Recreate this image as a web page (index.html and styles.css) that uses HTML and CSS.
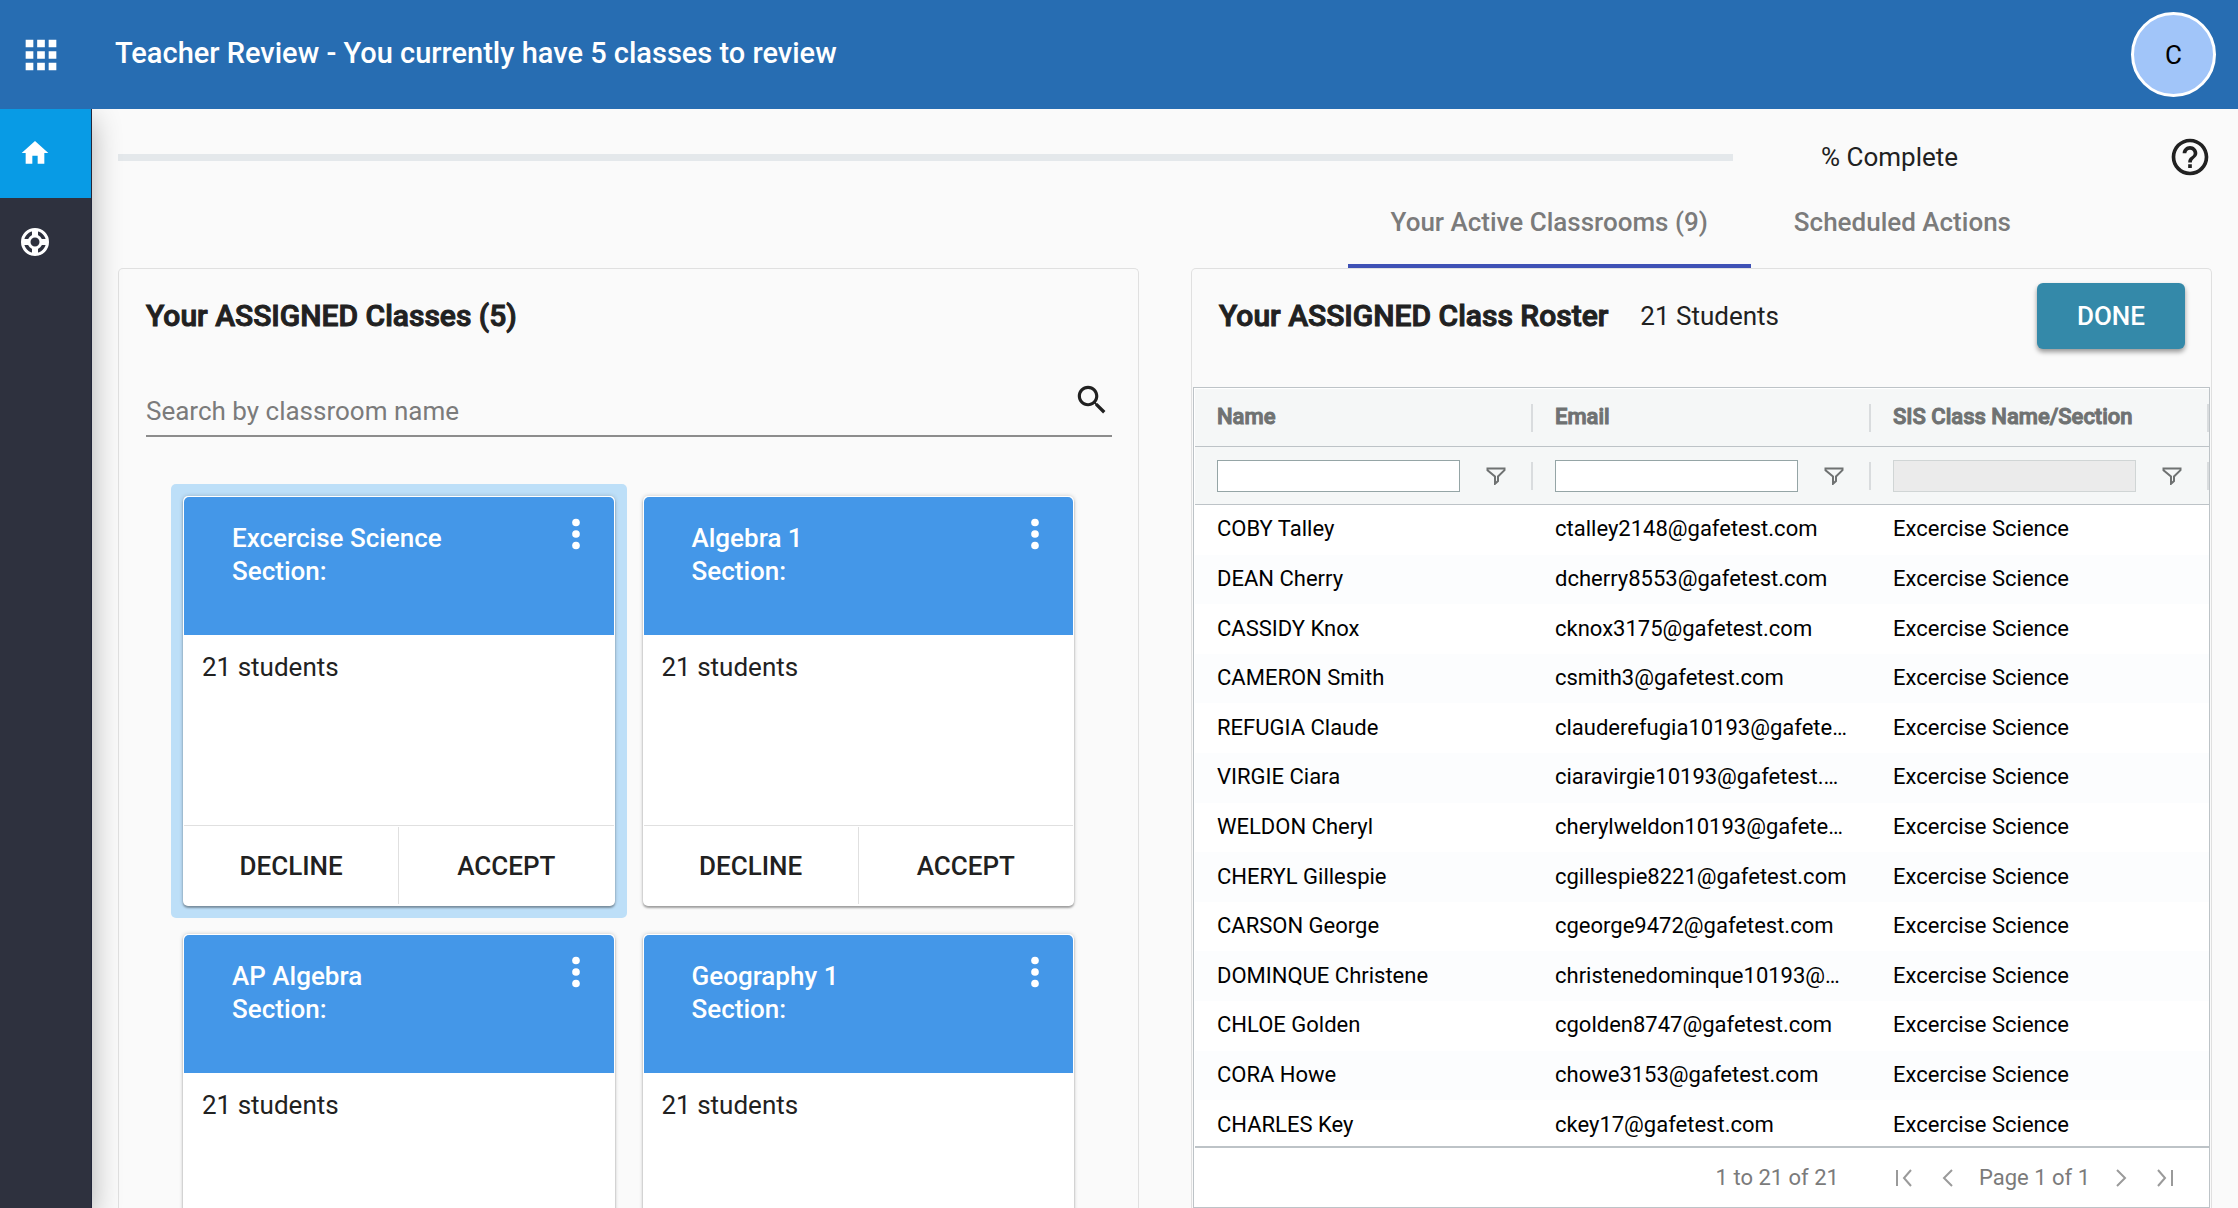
FILE: index.html
```html
<!DOCTYPE html>
<html lang="en">
<head>
    <meta charset="UTF-8">
    <meta name="viewport" content="width=device-width, initial-scale=1.0">
    <title>Teacher Review</title>
    <link rel="stylesheet" href="styles.css">
</head>
<body>
    <!-- Shared icons -->
    <svg class="icon-defs" aria-hidden="true">
        <symbol id="icon-more" viewBox="0 0 24 24">
            <circle cx="12" cy="6" r="2"/>
            <circle cx="12" cy="12" r="2"/>
            <circle cx="12" cy="18" r="2"/>
        </symbol>
        <symbol id="icon-filter" viewBox="0 0 20 18">
            <path d="M1.5 1.5h17v1.700l-6.500 6.300v4.500l-3 2.800v-7.300l-7.500-6.300z" fill="none" stroke="currentColor" stroke-width="2"/>
        </symbol>
    </svg>

    <!-- Header -->
    <header class="header">
        <button class="apps-button" type="button" aria-label="Apps">
            <svg viewBox="0 0 24 24"><path d="M4 8h4V4H4v4zm6 12h4v-4h-4v4zm-6 0h4v-4H4v4zm0-6h4v-4H4v4zm6 0h4v-4h-4v4zm6-10v4h4V4h-4zm-6 4h4V4h-4v4zm6 6h4v-4h-4v4zm0 6h4v-4h-4v4z"/></svg>
        </button>
        <h1>Teacher Review - You currently have 5 classes to review</h1>
        <button class="avatar" type="button">C</button>
    </header>

    <div class="layout">
        <!-- Sidebar -->
        <nav class="sidebar">
            <a class="active" href="#" aria-label="Home">
                <svg viewBox="0 0 24 24"><path d="M10 20v-6h4v6h5v-8h3L12 3 2 12h3v8z"/></svg>
            </a>
            <a href="#" aria-label="Support">
                <svg viewBox="0 0 28 28">
                    <circle cx="14" cy="14" r="12.5" fill="none" stroke="currentColor" stroke-width="3"/>
                    <circle cx="14" cy="14" r="6" fill="none" stroke="currentColor" stroke-width="3"/>
                    <path d="M14 2v6M14 20v6M2 14h6M20 14h6" stroke="currentColor" stroke-width="6"/>
                </svg>
            </a>
        </nav>

        <main class="content">
            <div class="progress-row">
                <div class="progress" role="progressbar" aria-label="Review progress"></div>
                <span class="progress-text">% Complete</span>
                <button class="help-button" type="button" aria-label="Help">
                    <svg viewBox="0 0 24 24"><path d="M11 18h2v-2h-2v2zm1-16C6.480 2 2 6.480 2 12s4.480 10 10 10 10-4.480 10-10S17.520 2 12 2zm0 18c-4.410 0-8-3.590-8-8s3.590-8 8-8 8 3.590 8 8-3.590 8-8 8zm0-14c-2.210 0-4 1.790-4 4h2c0-1.100.9-2 2-2s2 .9 2 2c0 2-3 1.750-3 5h2c0-2.250 3-2.500 3-5 0-2.210-1.790-4-4-4z"/></svg>
                </button>
            </div>

            <div class="tabs">
                <button class="tab selected" type="button">Your Active Classrooms (9)</button>
                <button class="tab" type="button">Scheduled Actions</button>
            </div>

            <div class="panels">
                <!-- Assigned classes -->
                <section class="panel classes">
                    <h2>Your ASSIGNED Classes (5)</h2>
                    <div class="search">
                        <input type="text" placeholder="Search by classroom name" aria-label="Search by classroom name">
                        <svg viewBox="0 0 24 24"><path d="M15.500 14h-.79l-.28-.27C15.410 12.590 16 11.110 16 9.500 16 5.910 13.090 3 9.500 3S3 5.910 3 9.500 5.910 16 9.500 16c1.610 0 3.090-.59 4.230-1.570l.27.28v.79l5 4.990L20.490 19l-4.990-5zm-6 0C7.010 14 5 11.990 5 9.500S7.010 5 9.500 5 14 7.010 14 9.500 11.990 14 9.500 14z"/></svg>
                    </div>

                    <div class="class-grid">
                        <div class="class-cell selected">
                            <article class="card">
                                <div class="card-header">
                                    <h3>Excercise Science<br>Section:</h3>
                                    <button type="button" aria-label="More"><svg><use href="#icon-more"/></svg></button>
                                </div>
                                <p>21 students</p>
                                <div class="card-actions">
                                    <button type="button">DECLINE</button>
                                    <button type="button">ACCEPT</button>
                                </div>
                            </article>
                        </div>
                        <div class="class-cell">
                            <article class="card">
                                <div class="card-header">
                                    <h3>Algebra 1<br>Section:</h3>
                                    <button type="button" aria-label="More"><svg><use href="#icon-more"/></svg></button>
                                </div>
                                <p>21 students</p>
                                <div class="card-actions">
                                    <button type="button">DECLINE</button>
                                    <button type="button">ACCEPT</button>
                                </div>
                            </article>
                        </div>
                        <div class="class-cell">
                            <article class="card">
                                <div class="card-header">
                                    <h3>AP Algebra<br>Section:</h3>
                                    <button type="button" aria-label="More"><svg><use href="#icon-more"/></svg></button>
                                </div>
                                <p>21 students</p>
                            </article>
                        </div>
                        <div class="class-cell">
                            <article class="card">
                                <div class="card-header">
                                    <h3>Geography 1<br>Section:</h3>
                                    <button type="button" aria-label="More"><svg><use href="#icon-more"/></svg></button>
                                </div>
                                <p>21 students</p>
                            </article>
                        </div>
                    </div>
                </section>

                <!-- Class roster -->
                <section class="panel roster">
                    <div class="roster-header">
                        <h2>Your ASSIGNED Class Roster</h2>
                        <span>21 Students</span>
                        <button class="done-button" type="button">DONE</button>
                    </div>

                    <div class="roster-grid">
                        <div class="roster-scroll">
                            <table>
                                <thead>
                                    <tr>
                                        <th><div class="head-cell">Name</div></th>
                                        <th><div class="head-cell">Email</div></th>
                                        <th><div class="head-cell">SIS Class Name/Section</div></th>
                                    </tr>
                                    <tr>
                                        <td><div class="head-cell"><input type="text" aria-label="Filter name"><svg><use href="#icon-filter"/></svg></div></td>
                                        <td><div class="head-cell"><input type="text" aria-label="Filter email"><svg><use href="#icon-filter"/></svg></div></td>
                                        <td><div class="head-cell"><input type="text" aria-label="Filter class" disabled><svg><use href="#icon-filter"/></svg></div></td>
                                    </tr>
                                </thead>
                                <tbody>
                                    <tr><td>COBY Talley</td><td>ctalley2148@gafetest.com</td><td>Excercise Science</td></tr>
                                    <tr><td>DEAN Cherry</td><td>dcherry8553@gafetest.com</td><td>Excercise Science</td></tr>
                                    <tr><td>CASSIDY Knox</td><td>cknox3175@gafetest.com</td><td>Excercise Science</td></tr>
                                    <tr><td>CAMERON Smith</td><td>csmith3@gafetest.com</td><td>Excercise Science</td></tr>
                                    <tr><td>REFUGIA Claude</td><td>clauderefugia10193@gafetest.com</td><td>Excercise Science</td></tr>
                                    <tr><td>VIRGIE Ciara</td><td>ciaravirgie10193@gafetest.com</td><td>Excercise Science</td></tr>
                                    <tr><td>WELDON Cheryl</td><td>cherylweldon10193@gafetest.com</td><td>Excercise Science</td></tr>
                                    <tr><td>CHERYL Gillespie</td><td>cgillespie8221@gafetest.com</td><td>Excercise Science</td></tr>
                                    <tr><td>CARSON George</td><td>cgeorge9472@gafetest.com</td><td>Excercise Science</td></tr>
                                    <tr><td>DOMINQUE Christene</td><td>christenedominque10193@gafetest.com</td><td>Excercise Science</td></tr>
                                    <tr><td>CHLOE Golden</td><td>cgolden8747@gafetest.com</td><td>Excercise Science</td></tr>
                                    <tr><td>CORA Howe</td><td>chowe3153@gafetest.com</td><td>Excercise Science</td></tr>
                                    <tr><td>CHARLES Key</td><td>ckey17@gafetest.com</td><td>Excercise Science</td></tr>
                                </tbody>
                            </table>
                        </div>
                        <div class="paging">
                            <span class="paging-rows">1 to 21 of 21</span>
                            <button type="button" aria-label="First page"><svg viewBox="0 0 18 18"><path d="M2 1v16M16 1L9 9l7 8"/></svg></button>
                            <button type="button" aria-label="Previous page"><svg viewBox="0 0 18 18"><path d="M13 1L5 9l8 8"/></svg></button>
                            <span>Page 1 of 1</span>
                            <button type="button" aria-label="Next page"><svg viewBox="0 0 18 18"><path d="M5 1l8 8-8 8"/></svg></button>
                            <button type="button" aria-label="Last page"><svg viewBox="0 0 18 18"><path d="M16 1v16M2 1l7 8-7 8"/></svg></button>
                        </div>
                    </div>
                </section>
            </div>
        </main>
    </div>
</body>
</html>
```

FILE: styles.css
```css
* {
    box-sizing: border-box;
}

body {
    font-family: Roboto, Arial, sans-serif;
    font-size: 26px;
    color: #212121;
    background-color: #fafafa;
    margin: 0;
    height: 100vh;
    display: flex;
    flex-direction: column;
    overflow: hidden;
}

h1, h2, h3, p {
    margin: 0;
}

button {
    font-family: inherit;
    font-size: 26px;
    color: inherit;
    background: none;
    border: none;
    padding: 0;
    cursor: pointer;
}

svg {
    display: block;
    fill: currentColor;
}

.icon-defs {
    display: none;
}

/* Header */
.header {
    display: flex;
    align-items: center;
    height: 109px;
    flex-shrink: 0;
    padding: 0 22px 0 18px;
    background-color: #276db2;
    color: white;
}

.apps-button svg {
    width: 46px;
    height: 46px;
}

.header h1 {
    flex: 1;
    margin-left: 51px;
    padding-bottom: 3px;
    font-size: 29px;
    font-weight: 500;
}

.avatar {
    width: 85px;
    height: 85px;
    border: 3px solid white;
    border-radius: 50%;
    background-color: #a1c5f9;
    color: black;
}

.layout {
    display: flex;
    flex: 1;
    min-height: 0;
}

/* Sidebar */
.sidebar {
    width: 92px;
    flex-shrink: 0;
    background-color: #2e313e;
    border-right: 1px solid #23263a;
    box-shadow: 0 10px 30px rgba(0, 0, 0, 0.3);
    clip-path: inset(0 -50px 0 0);
}

.sidebar a {
    display: flex;
    align-items: center;
    height: 89px;
    padding: 0 0 2px 19px;
    color: white;
}

.sidebar a.active {
    background-color: #089be5;
}

.sidebar svg {
    width: 32px;
    height: 28px;
}

.sidebar .active svg {
    height: 32px;
}

.content {
    display: flex;
    flex-direction: column;
    flex: 1;
    min-width: 0;
    padding: 0 26px;
}

/* Progress bar and help */
.progress-row {
    display: flex;
    align-items: center;
    height: 95px;
    flex-shrink: 0;
}

.progress {
    flex: 1;
    height: 7px;
    margin-top: 2px;
    background-color: #e4e8eb;
}

.progress-text {
    width: 435px;
    padding-left: 88px;
}

.help-button svg {
    width: 44px;
    height: 44px;
}

/* Tabs */
.tabs {
    display: flex;
    justify-content: flex-end;
    height: 64px;
    flex-shrink: 0;
    padding-right: 158px;
}

.tab {
    padding: 0 43px 24px;
    border-bottom: 4px solid transparent;
    color: #7b7b7b;
    font-weight: 500;
}

.tab.selected {
    border-bottom-color: #3f51b5;
}

/* Panels */
.panels {
    display: grid;
    grid-template-columns: 1fr 1fr;
    grid-template-rows: 100%;
    column-gap: 52px;
    flex: 1;
    min-height: 0;
}

.panel {
    min-width: 0;
    border: 1px solid #e0e0e0;
    border-bottom: none;
    border-radius: 5px 5px 0 0;
    overflow: hidden;
}

h2 {
    font-size: 30px;
    font-weight: 500;
    line-height: 94px;
    -webkit-text-stroke: 1px currentColor;
}

.classes h2 {
    padding-left: 27px;
}

.search {
    display: flex;
    align-items: flex-start;
    height: 58px;
    margin: 16px 26px 47px 27px;
    border-bottom: 2px solid #8c8c8c;
}

.search input {
    flex: 1;
    height: 64px;
    padding: 0;
    border: none;
    outline: none;
    background: none;
    font: inherit;
}

.search input::placeholder {
    color: #7b7b7b;
    opacity: 1;
}

.search svg {
    width: 38px;
    height: 38px;
    margin: 2px 1px 0 0;
}

/* Class cards */
.class-grid {
    display: grid;
    grid-template-columns: 1fr 1fr;
    gap: 4px;
    padding: 0 52px;
}

.class-cell {
    padding: 12px;
    border-radius: 5px;
}

.class-cell.selected {
    background-color: #bddff8;
}

.card {
    display: flex;
    flex-direction: column;
    height: 410px;
    padding: 1px;
    border-radius: 5px;
    background-color: white;
    box-shadow: 0 2px 2px rgba(0, 0, 0, 0.3), 0 0 4px rgba(0, 0, 0, 0.2);
}

.card-header {
    display: flex;
    justify-content: space-between;
    align-items: flex-start;
    height: 138px;
    padding: 14px 15px 0 48px;
    border-radius: 5px 5px 0 0;
    background-color: #4497e8;
    color: white;
}

.card h3 {
    padding-top: 11px;
    font-size: 26px;
    font-weight: 500;
    line-height: 33px;
}

.card-header svg {
    width: 46px;
    height: 46px;
}

.card p {
    flex: 1;
    padding: 16px 18px;
    line-height: 32px;
}

.card-actions {
    display: flex;
    height: 80px;
    border-top: 1px solid #e0e0e0;
    padding: 1px 0;
}

.card-actions button {
    flex: 1;
    font-weight: 500;
}

.card-actions button + button {
    border-left: 1px solid #e0e0e0;
}

/* Roster */
.roster {
    display: flex;
    flex-direction: column;
}

.roster-header {
    display: flex;
    align-items: center;
    height: 118px;
    flex-shrink: 0;
    padding: 0 26px 24px 27px;
}

.roster-header span {
    margin-left: 32px;
}

.done-button {
    width: 148px;
    height: 66px;
    margin-left: auto;
    border-radius: 6px;
    background-color: #3489a9;
    color: white;
    font-weight: 500;
    box-shadow: 0 3px 5px rgba(0, 0, 0, 0.4);
}

.roster-grid {
    display: flex;
    flex-direction: column;
    flex: 1;
    min-height: 0;
    margin: 0 1px;
    padding: 1px 0 0 1px;
    border: 1px solid #bdc3c7;
    background-color: white;
    font-size: 22px;
    color: black;
}

.roster-scroll {
    flex: 1;
    min-height: 0;
    overflow: hidden;
}

table {
    width: 100%;
    height: 761px;
    table-layout: fixed;
    border-collapse: separate;
    border-spacing: 0;
}

thead tr {
    height: 58px;
    background-color: #f5f7f7;
    color: #6f7272;
}

tbody tr:nth-child(even) {
    background-color: #fcfdfe;
}

th, td {
    padding: 0 22px 2px;
    overflow: hidden;
    text-overflow: ellipsis;
    white-space: nowrap;
    text-align: left;
}

thead th, thead td {
    height: 58px;
    padding: 0;
    border-bottom: 1px solid #bdc3c7;
}

th {
    font-weight: 500;
    -webkit-text-stroke: 1px currentColor;
}

.head-cell {
    display: flex;
    align-items: center;
    height: 28px;
    padding-left: 22px;
    border-right: 2px solid #d9dcde;
}

th .head-cell {
    padding-bottom: 2px;
}

.head-cell input {
    flex: 1;
    min-width: 0;
    height: 32px;
    border: 1px solid #95a5a6;
    background-color: white;
}

.head-cell input:disabled {
    border-color: #d0d5d5;
    background-color: #ebebeb;
}

.head-cell svg {
    width: 20px;
    height: 18px;
    margin: 0 25px 0 26px;
}

/* Paging */
.paging {
    display: flex;
    align-items: center;
    justify-content: flex-end;
    height: 61px;
    flex-shrink: 0;
    gap: 22px;
    padding-right: 35px;
    border-top: 2px solid #bdc3c7;
    color: #7b7b7b;
}

.paging-rows {
    margin-right: 34px;
}

.paging button + button {
    margin-left: 4px;
}

.paging svg {
    width: 18px;
    height: 18px;
    fill: none;
    stroke: #9a9a9a;
    stroke-width: 2;
}
```
